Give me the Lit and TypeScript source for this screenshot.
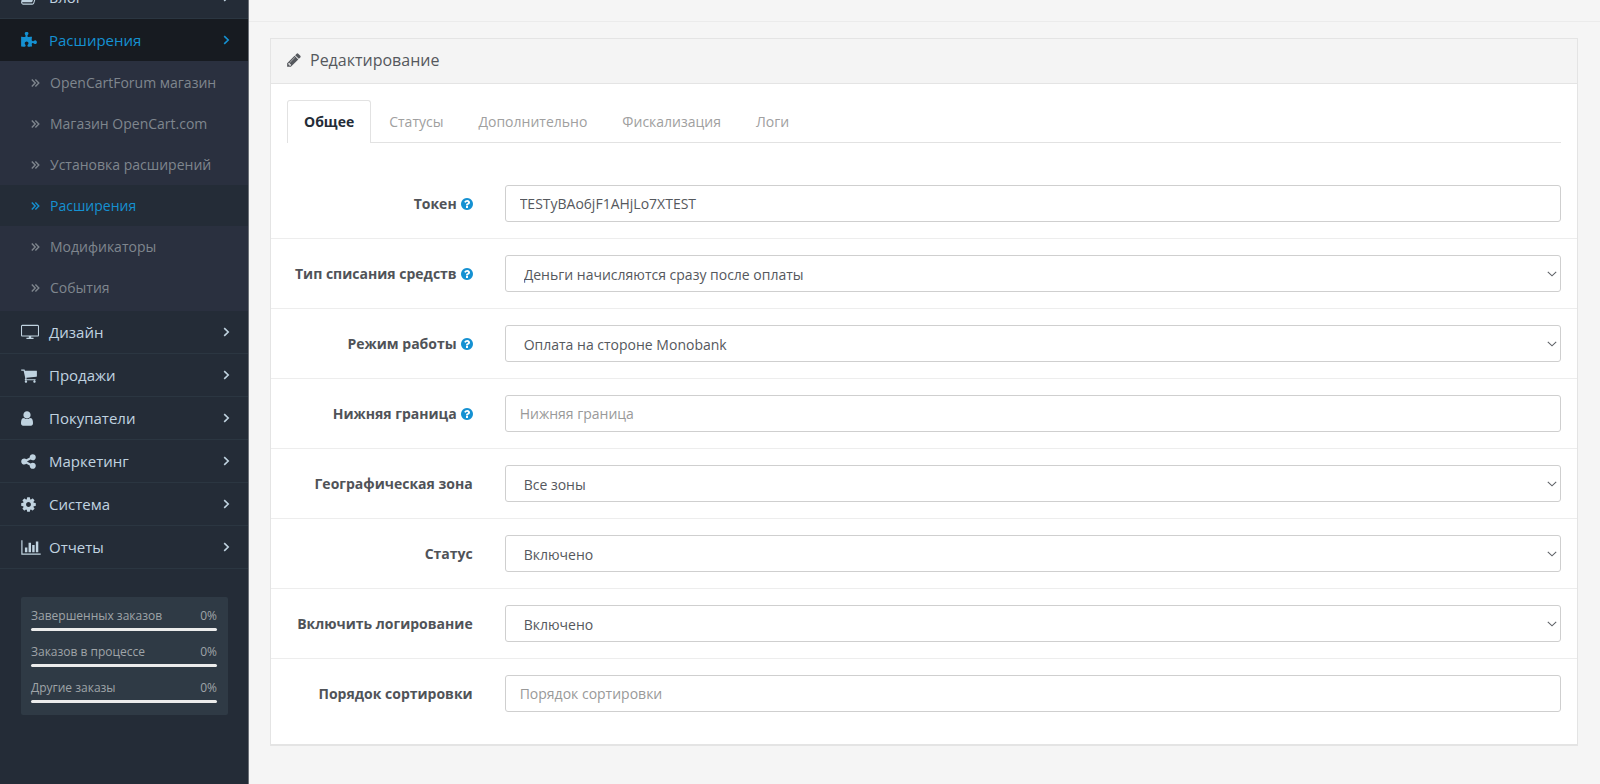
import { LitElement, html, css, svg, nothing } from "lit";
import { customElement, property, state } from "lit/decorators.js";
import { classMap } from "lit/directives/class-map.js";

interface Glyph {
  box: string;
  width: number;
  path: string;
}

const GLYPHS: Record<string, Glyph> = {
  book: {
    box: "64 0 1664 1792",
    width: 16,
    path: "M1703 478q40 57 18 129l-275 906q-19 64-76.5 107.5t-122.5 43.5h-923q-77 0-148.5-53.5t-99.5-131.5q-24-67-2-127 0-4 3-27t4-37q1-8-3-21.5t-3-19.5q2-11 8-21t16.5-23.5 16.5-23.5q23-38 45-91.5t30-91.5q3-10 .5-30t-.5-28q3-11 17-28t17-23q21-36 42-92t25-90q1-9-2.5-32t.5-28q4-13 22-30.5t22-22.5q19-26 42.5-84.5t27.5-96.5q1-8-3-25.5t-2-26.5q2-8 9-18t18-23 17-21q8-12 16.5-30.5t15-35 16-36 19.5-32 26.5-23.5 36-11.5 47.5 5.5l-1 3q38-9 51-9h761q74 0 114 56t18 130l-274 906q-36 119-71.5 153.5t-128.5 34.5h-869q-27 0-38 15-11 16-1 43 24 70 144 70h923q29 0 56-15.5t35-41.5l300-987q7-22 5-57 38 15 59 43z",
  },
  puzzle: {
    box: "91 0 1664 1792",
    width: 16,
    path: "M1755 1083q0 81-44.5 135t-123.5 54q-41 0-77.5-17.5t-59-38-56.5-38-71-17.5q-110 0-110 124 0 39 16 115t15 115v5q-22 0-33 1-34 3-97.5 11.5t-115.5 13.5-98 5q-61 0-103-26.5t-42-83.5q0-37 17.5-71t38-56.5 38-59 17.5-77.5q0-79-54-123.5t-135-44.5q-84 0-143 45.5t-59 127.5q0 43 15 83t33.5 64.5 33.5 53 15 50.5q0 45-46 89-37 35-117 35-95 0-245-24-9-2-27.5-4t-27.5-4l-13-2q-1 0-3-1-2 0-2-1v-1024q2 1 17.5 3.5t34 5 21.5 3.5q150 24 245 24 80 0 117-35 46-44 46-89 0-22-15-50.5t-33.5-53-33.5-64.5-15-83q0-82 59-127.5t144-45.5q80 0 134 44.5t54 123.5q0 41-17.5 77.5t-38 59-38 56.5-17.5 71q0 57 42 83.5t103 26.5q64 0 180-15t163-17v2q-1 2-3.5 17.5t-5 34-3.5 21.5q-24 150-24 245 0 80 35 117 44 46 89 46 22 0 50.5-15t53-33.5 64.5-33.5 83-15q82 0 127.5 59t45.5 143z",
  },
  television: {
    box: "-64 0 1920 1792",
    width: 18,
    path: "M1744 1200v-992q0-16-16-16h-1664q-16 0-16 16v992q0 16 16 16h1664q16 0 16-16zm112-992v992q0 54-38 91t-90 37h-704v128h224q32 0 32 32v64q0 32-32 32h-704q-32 0-32-32v-64q0-32 32-32h224v-128h-704q-52 0-90-37t-38-91v-992q0-54 38-91t90-37h1664q52 0 90 37t38 91z",
  },
  cart: {
    box: "64 0 1664 1792",
    width: 16,
    path: "M704 1536q0 52-38 90t-90 38-90-38-38-90 38-90 90-38 90 38 38 90zm896 0q0 52-38 90t-90 38-90-38-38-90 38-90 90-38 90 38 38 90zm128-1088v512q0 24-16.5 42.5t-40.5 21.5l-1044 122q13 60 13 70 0 16-24 64h920q26 0 45 19t19 45-19 45-45 19h-1024q-26 0-45-19t-19-45q0-11 8-31.5t16-36 21.5-40 15.5-29.5l-177-823h-204q-26 0-45-19t-19-45 19-45 45-19h256q16 0 28.5 6.5t19.5 15.5 13 24.5 8 26 5.5 29.5 4.5 26h1201q26 0 45 19t19 45z",
  },
  user: {
    box: "256 0 1280 1792",
    width: 12,
    path: "M1536 1399q0 109-62.5 187t-150.5 78h-854q-88 0-150.5-78t-62.5-187q0-85 8.5-160.5t31.5-152 58.5-131 94-89 134.5-34.5q131 128 313 128t313-128q76 0 134.5 34.5t94 89 58.5 131 31.5 152 8.5 160.5zm-256-887q0 159-112.5 271.5t-271.5 112.5-271.5-112.5-112.5-271.5 112.5-271.5 271.5-112.5 271.5 112.5 112.5 271.5z",
  },
  share: {
    box: "128 0 1536 1792",
    width: 15,
    path: "M1344 1024q133 0 226.5 93.5t93.5 226.5-93.5 226.5-226.5 93.5-226.5-93.5-93.5-226.5q0-12 2-34l-360-180q-92 86-218 86-133 0-226.5-93.5t-93.5-226.5 93.5-226.5 226.5-93.5q126 0 218 86l360-180q-2-22-2-34 0-133 93.5-226.5t226.5-93.5 226.5 93.5 93.5 226.5-93.5 226.5-226.5 93.5q-126 0-218-86l-360 180q2 22 2 34t-2 34l360 180q92-86 218-86z",
  },
  cog: {
    box: "128 0 1536 1792",
    width: 15,
    path: "M1152 896q0-106-75-181t-181-75-181 75-75 181 75 181 181 75 181-75 75-181zm512-109v222q0 12-8 23t-20 13l-185 28q-19 54-39 91 35 50 107 138 10 12 10 25t-9 23q-27 37-99 108t-94 71q-12 0-26-9l-138-108q-44 23-91 38-16 136-29 186-7 28-36 28h-222q-14 0-24.5-8.5t-11.5-21.5l-28-184q-49-16-90-37l-141 107q-10 9-25 9-14 0-25-11-126-114-165-168-7-10-7-23 0-12 8-23 15-21 51-66.5t54-70.5q-27-50-41-99l-183-27q-13-2-21-12.5t-8-23.5v-222q0-12 8-23t19-13l186-28q14-46 39-92-40-57-107-138-10-12-10-24 0-10 9-23 26-36 98.5-107.5t94.5-71.5q13 0 26 10l138 107q44-23 91-38 16-136 29-186 7-28 36-28h222q14 0 24.5 8.5t11.5 21.5l28 184q49 16 90 37l142-107q9-9 24-9 13 0 25 10 129 119 165 170 7 8 7 22 0 12-8 23-15 21-51 66.5t-54 70.5q26 50 41 98l183 28q13 2 21 12.5t8 23.5z",
  },
  chart: {
    box: "0 0 2048 1792",
    width: 20,
    path: "M640 896v512h-256v-512h256zm384-512v1024h-256v-1024h256zm1024 1152v128h-2048v-1536h128v1408h1920zm-640-896v768h-256v-768h256zm384-384v1152h-256v-1152h256z",
  },
  pencil: {
    box: "128 0 1536 1792",
    width: 14,
    path: "M491 1536l91-91-235-235-91 91v107h128v128h107zm523-928q0-22-22-22-10 0-17 7l-542 542q-7 7-7 17 0 22 22 22 10 0 17-7l542-542q7-7 7-17zm-54-192l416 416-832 832h-416v-416zm683 96q0 53-37 90l-166 166-416-416 166-165q36-38 90-38 53 0 91 38l235 234q37 39 37 91z",
  },
  help: {
    box: "128 128 1536 1536",
    width: 12,
    path: "M1024 1376v-192q0-14-9-23t-23-9h-192q-14 0-23 9t-9 23v192q0 14 9 23t23 9h192q14 0 23-9t9-23zm256-672q0-88-55.5-163t-138.5-116-170-41q-243 0-371 213-15 24 8 42l132 100q7 6 19 6 16 0 25-12 53-68 86-92 34-24 86-24 48 0 85.5 26t37.5 59q0 38-20 61t-68 45q-63 28-115.5 86.5t-52.5 125.5v36q0 14 9 23t23 9h192q14 0 23-9t9-23q0-19 21.5-49.5t54.5-49.5q32-18 49-28.5t46-35 44.5-48 28-60.5 12.5-81zm384 192q0 209-103 385.5t-279.5 279.5-385.5 103-385.5-103-279.5-279.5-103-385.5 103-385.5 279.5-279.5 385.5-103 385.5 103 279.5 279.5 103 385.5z",
  },
};

const glyph = (name: string) => {
  const g = GLYPHS[name];
  return html`<svg class="glyph" width=${g.width} viewBox=${g.box} aria-hidden="true">
    ${svg`<path fill="currentColor" d=${g.path} />`}
  </svg>`;
};

interface MenuItem {
  icon: string;
  text: string;
  children?: string[];
}

const MENU: MenuItem[] = [
  { icon: "book", text: "Блог" },
  {
    icon: "puzzle",
    text: "Расширения",
    children: [
      "OpenCartForum магазин",
      "Магазин OpenCart.com",
      "Установка расширений",
      "Расширения",
      "Модификаторы",
      "События",
    ],
  },
  { icon: "television", text: "Дизайн" },
  { icon: "cart", text: "Продажи" },
  { icon: "user", text: "Покупатели" },
  { icon: "share", text: "Маркетинг" },
  { icon: "cog", text: "Система" },
  { icon: "chart", text: "Отчеты" },
];

const STATS = [
  { text: "Завершенных заказов", value: 0 },
  { text: "Заказов в процессе", value: 0 },
  { text: "Другие заказы", value: 0 },
];

@customElement("side-menu")
export class SideMenu extends LitElement {
  static styles = css`
    :host {
      display: block;
      box-sizing: border-box;
      overflow: hidden;
      background: #242c37;
      border-right: 1px solid #6c7178;
      color: #c0d3e0;
      font-size: 15px;
    }
    ul {
      list-style: none;
      margin: 0;
      padding: 0;
    }
    /* The column is shown scrolled partway down its first entry. */
    .menu {
      margin-top: -24px;
    }
    .entry {
      border-bottom: 1px solid #2b3641;
    }
    .link {
      display: flex;
      align-items: center;
      height: 42px;
      padding: 0 18px 0 21px;
      color: inherit;
      text-decoration: none;
    }
    .icon {
      display: flex;
      width: 28px;
    }
    .glyph {
      display: block;
      height: 17px;
    }
    .text {
      flex: 1;
    }
    .open > .link {
      background: #171b21;
      color: #1591d2;
    }
    .open {
      border-bottom: 0;
    }
    .sub {
      padding: 1px 0 3px;
      background: #2a303f;
      font-size: 14px;
      color: #7f868e;
    }
    .sublink {
      display: flex;
      align-items: center;
      height: 41px;
      padding-left: 31px;
      color: inherit;
      text-decoration: none;
    }
    .mark {
      width: 19px;
      display: flex;
    }
    .current {
      background: #242c37;
      color: #1591d2;
    }
    .stats {
      display: grid;
      gap: 12px;
      margin: 28px 20px 0 21px;
      padding: 10px 11px 12px 10px;
      border-radius: 2px;
      background: #2f3a45;
      color: #9fa4a8;
      font-size: 12px;
      line-height: 18px;
    }
    .stat {
      display: grid;
      gap: 3px;
    }
    .line {
      display: flex;
      justify-content: space-between;
    }
    .track {
      height: 3px;
      border-radius: 2px;
      background: #ececec;
    }
    .fill {
      height: 100%;
      background: #1591d2;
    }
  `;

  render() {
    return html`
      <nav class="menu">
        <ul>
          ${MENU.map(
            (item) => html`<li class=${classMap({ entry: true, open: !!item.children })}>
              <a class="link" href="#">
                <span class="icon">${glyph(item.icon)}</span>
                <span class="text">${item.text}</span>
                <svg width="7" height="10" viewBox="0 0 7 10" fill="none" stroke="currentColor" stroke-width="1.6" aria-hidden="true">
                  <path d="M1.2 1.2 5.2 5 1.2 8.8" />
                </svg>
              </a>
              ${item.children
                ? html`<ul class="sub">
                    ${item.children.map(
                      (text) => html`<li>
                        <a class=${classMap({ sublink: true, current: text === item.text })} href="#">
                          <span class="mark">
                            <svg width="9" height="10" viewBox="0 0 9 10" fill="none" stroke="currentColor" stroke-width="1.4" aria-hidden="true">
                              <path d="M.8 1.5 4.2 5 .8 8.5M4.4 1.5 7.8 5 4.4 8.5" />
                            </svg>
                          </span>
                          <span>${text}</span>
                        </a>
                      </li>`
                    )}
                  </ul>`
                : nothing}
            </li>`
          )}
        </ul>
      </nav>
      <section class="stats">
        ${STATS.map(
          (s) => html`<div class="stat">
            <div class="line"><span>${s.text}</span><span>${s.value}%</span></div>
            <div class="track"><div class="fill" style="width:${s.value}%"></div></div>
          </div>`
        )}
      </section>
    `;
  }
}

interface Field {
  id: string;
  label: string;
  help?: boolean;
  value?: string;
  options?: string[];
}

const FIELDS: Field[] = [
  { id: "token", label: "Токен", help: true, value: "TESTyBAo6jF1AHjLo7XTEST" },
  { id: "hold", label: "Тип списания средств", help: true, options: ["Деньги начисляются сразу после оплаты"] },
  { id: "mode", label: "Режим работы", help: true, options: ["Оплата на стороне Monobank"] },
  { id: "minimum", label: "Нижняя граница", help: true },
  { id: "zone", label: "Географическая зона", options: ["Все зоны"] },
  { id: "status", label: "Статус", options: ["Включено"] },
  { id: "logging", label: "Включить логирование", options: ["Включено"] },
  { id: "sort", label: "Порядок сортировки" },
];

@customElement("form-row")
export class FormRow extends LitElement {
  @property({ attribute: false }) field!: Field;

  static styles = css`
    :host {
      display: grid;
      grid-template-columns: 1fr 5fr;
      align-items: center;
      padding: 16px 0;
    }
    .label {
      display: flex;
      justify-content: flex-end;
      align-items: center;
      gap: 4px;
      padding: 0 16px;
      color: #505358;
      font-weight: 700;
      text-align: right;
    }
    .glyph {
      display: block;
      height: 12px;
      color: #1591d2;
    }
    .cell {
      position: relative;
      padding: 0 16px;
    }
    .control {
      display: block;
      box-sizing: border-box;
      width: 100%;
      height: 37px;
      padding: 8px 14px;
      border: 1px solid #cfcfcf;
      border-radius: 3px;
      background: #fff;
      color: #55585d;
      font: inherit;
      line-height: 19px;
    }
    select.control {
      appearance: none;
      padding: 9px 18px 7px;
    }
    .arrow {
      position: absolute;
      top: 16px;
      right: 20px;
      pointer-events: none;
      color: #5f6267;
    }
    .control::placeholder {
      color: #999;
      opacity: 1;
    }
  `;

  render() {
    const f = this.field;
    return html`
      <label class="label" for=${f.id}>${f.label}${f.help ? glyph("help") : nothing}</label>
      <div class="cell">
        ${f.options
          ? html`<select class="control" id=${f.id}>
                ${f.options.map((o) => html`<option>${o}</option>`)}
              </select>
              <svg class="arrow" width="10" height="6" viewBox="0 0 10 6" fill="none" stroke="currentColor" stroke-width="1.1" aria-hidden="true">
                <path d="M.8 .8 5 4.8 9.2 .8" />
              </svg>`
          : html`<input class="control" id=${f.id} type="text" .value=${f.value ?? ""} placeholder=${f.label} />`}
      </div>
    `;
  }
}

const TABS = ["Общее", "Статусы", "Дополнительно", "Фискализация", "Логи"];

@customElement("app-root")
export class AppRoot extends LitElement {
  @state() private tab = 0;

  static styles = css`
    :host {
      display: grid;
      grid-template-columns: 249px 1fr;
      min-height: 100vh;
      background: #f5f5f5;
      color: #55585d;
      font-family: "Open Sans", "Noto Sans", sans-serif;
      font-size: 14px;
      line-height: 20px;
    }
    .top {
      height: 21px;
      border-bottom: 1px solid #ebebeb;
    }
    .panel {
      margin: 16px 22px 0 21px;
      border: 1px solid #e4e4e4;
      border-bottom-width: 2px;
      background: #fff;
    }
    .heading {
      display: flex;
      align-items: center;
      gap: 9px;
      height: 42px;
      padding: 0 16px 2px;
      border-bottom: 1px solid #e4e4e4;
      background: #f4f4f4;
    }
    .glyph {
      display: block;
      height: 16px;
    }
    .title {
      margin: 0;
      font-size: 16px;
      font-weight: 400;
    }
    .tabs {
      display: flex;
      gap: 1px;
      margin: 16px 16px 26px;
      border-bottom: 1px solid #e2e2e2;
    }
    .tab {
      margin-bottom: -1px;
      padding: 11px 16px;
      border: 1px solid transparent;
      border-bottom: 0;
      border-radius: 3px 3px 0 0;
      background: none;
      color: #a0a0a0;
      font: inherit;
      cursor: pointer;
    }
    .active {
      border-color: #e2e2e2;
      background: #fff;
      color: #242c37;
      font-weight: 700;
    }
    .form {
      padding-bottom: 16px;
    }
    .row + .row {
      border-top: 1px solid #ededed;
    }
  `;

  render() {
    return html`
      <side-menu></side-menu>
      <main>
        <div class="top"></div>
        <section class="panel">
          <header class="heading">${glyph("pencil")}<h3 class="title">Редактирование</h3></header>
          <div class="tabs" role="tablist">
            ${TABS.map(
              (text, i) => html`<button
                class=${classMap({ tab: true, active: i === this.tab })}
                role="tab"
                aria-selected=${i === this.tab}
                @click=${() => (this.tab = i)}
              >${text}</button>`
            )}
          </div>
          <form class="form">
            ${FIELDS.map((f) => html`<form-row class="row" .field=${f}></form-row>`)}
          </form>
        </section>
      </main>
    `;
  }
}
